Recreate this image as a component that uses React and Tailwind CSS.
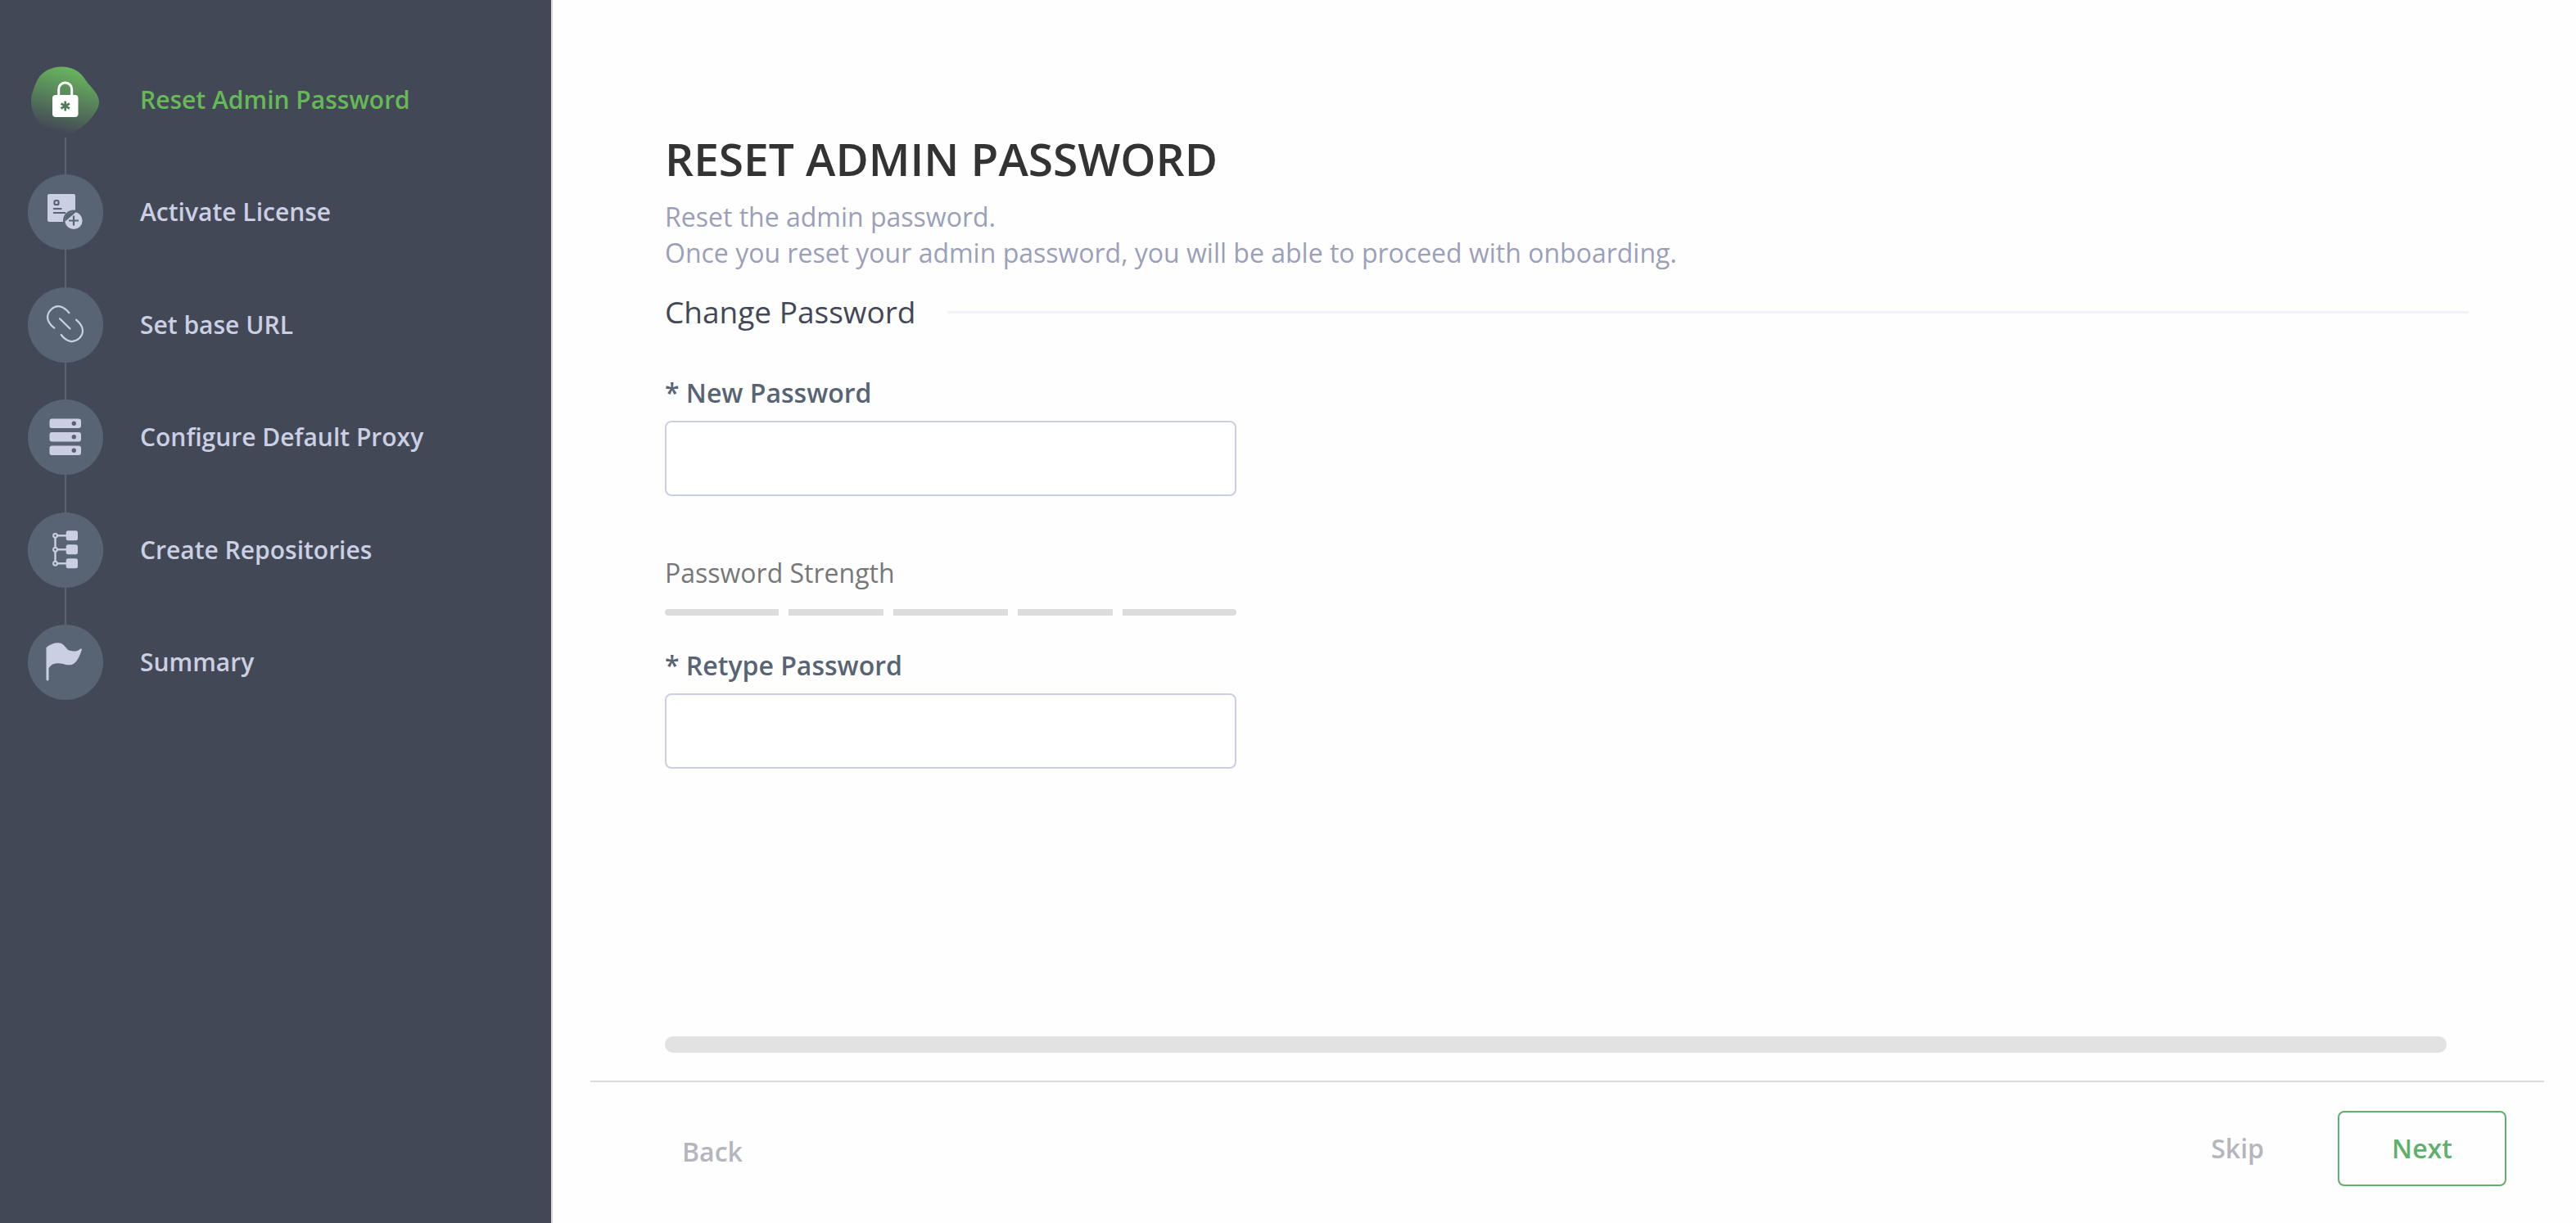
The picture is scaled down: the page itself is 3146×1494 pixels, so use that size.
import React, { useState } from 'react';

/* Icons share a 92x92 box, the size of a step's circle. */

function PasswordIcon() {
  return (
    <svg viewBox="0 0 92 92" className="size-full" aria-hidden="true">
      <defs>
        <linearGradient id="blob" x1="0.66" y1="0.05" x2="0.4" y2="0.97">
          <stop offset="0" stopColor="#69b45e" />
          <stop offset="1" stopColor="#69b45e" stopOpacity="0" />
        </linearGradient>
      </defs>
      <path
        d="M41 5.500C52 5.500 61 9.500 67 17C70 20.500 71 23 75 27.500C81 34.500 87 41 87 48.500C87 57 80 66 71 75C63 82 54 88 45 88C24 88 4 70 4 48C4 38 8 30 12 21C18 10.500 30 5.500 41 5.500Z"
        fill="url(#blob)"
      />
      <path d="M37.700 42V33a8 8 0 0 1 16 0V42" fill="none" stroke="#fff" strokeWidth="3" />
      <rect x="30" y="40" width="31.500" height="27" rx="4" fill="#fff" />
      <path d="M45.700 47.500v12M40.500 50.500l10.400 6M40.500 56.500l10.400-6" stroke="#4f7a5c" strokeWidth="2.600" />
    </svg>
  );
}

function LicenseIcon() {
  return (
    <svg viewBox="0 0 92 92" className="size-full" aria-hidden="true">
      <rect x="24" y="24" width="34" height="34" rx="2" fill="#cbcfe3" />
      <rect x="32.500" y="32" width="5" height="5" rx="1.500" fill="none" stroke="#586474" strokeWidth="2.200" />
      <path d="M31 42h10.500M31 47h15" stroke="#586474" strokeWidth="2.200" />
      <circle cx="56" cy="56.500" r="13" fill="#586474" />
      <circle cx="56" cy="56.500" r="10.600" fill="#cbcfe3" />
      <path d="M45.500 57.500C44.500 50 51 44.500 58.500 46.200Z" fill="#586474" />
      <path d="M56 50.500v12M50 56.500h12" stroke="#586474" strokeWidth="2.200" />
    </svg>
  );
}

function LinkIcon() {
  return (
    <svg viewBox="0 0 92 92" className="size-full" aria-hidden="true">
      <g fill="none" stroke="#cbcfe3" strokeWidth="2.200" strokeLinecap="round">
        <path d="M50.500 31.200C43 22 35 21 29 26.500C22 33 22 42 32.300 49.700" />
        <path d="M59 39.700C69 48 69 56 62.500 62.500C56 68 48 67.500 40.700 58" />
        <path d="M39 38.300L51.500 50.500" />
      </g>
    </svg>
  );
}

function ProxyIcon() {
  return (
    <svg viewBox="0 0 92 92" className="size-full" aria-hidden="true">
      {[23.5, 40, 56.5].map((y) => (
        <g key={y}>
          <rect x="26.500" y={y} width="38.500" height="11.500" rx="3" fill="#cbcfe3" />
          <circle cx="56.300" cy={y + 5.8} r="2.700" fill="#586474" />
        </g>
      ))}
    </svg>
  );
}

function RepositoriesIcon() {
  return (
    <svg viewBox="0 0 92 92" className="size-full" aria-hidden="true">
      <path d="M33.500 28v34.500" stroke="#cbcfe3" strokeWidth="2.400" />
      {[28.3, 45.3, 62.3].map((y) => (
        <g key={y}>
          <path d={`M36 ${y}h12`} stroke="#cbcfe3" strokeWidth="2.400" />
          <circle cx="33.500" cy={y} r="2.400" fill="#586474" stroke="#cbcfe3" strokeWidth="2" />
          <rect x="46.700" y={y - 6} width="14.300" height="12" rx="2.500" fill="#cbcfe3" />
        </g>
      ))}
    </svg>
  );
}

function SummaryIcon() {
  return (
    <svg viewBox="0 0 92 92" className="size-full" aria-hidden="true">
      <path
        d="M22.500 28C27 24 32 22.200 37 22.200C42 22.200 44.500 25.500 47 28.800C49 31.300 50 31.700 54 32.200C60 33 61 32 64 29.800C65.300 29 66.300 29.500 65.800 31C63.500 38 61 44 56.500 47.500C52.500 50.300 47 49.300 43 48C35 46 28.500 47.500 25.500 53.500V67a1.300 1.300 0 0 1-3 0Z"
        fill="#cbcfe3"
      />
    </svg>
  );
}

const STEPS = [
  { id: 'password', label: 'Reset Admin Password', icon: <PasswordIcon /> },
  { id: 'license', label: 'Activate License', icon: <LicenseIcon /> },
  { id: 'url', label: 'Set base URL', icon: <LinkIcon /> },
  { id: 'proxy', label: 'Configure Default Proxy', icon: <ProxyIcon /> },
  { id: 'repositories', label: 'Create Repositories', icon: <RepositoriesIcon /> },
  { id: 'summary', label: 'Summary', icon: <SummaryIcon /> },
];

function StepSidebar({ current }) {
  return (
    <aside className="w-[675px] shrink-0 border-r-2 border-[#d8d8da] bg-[#434856] px-[34px] pt-[76px]">
      <ol className="flex h-[779px] flex-col">
        {STEPS.map(({ id, label, icon }, i) => {
          const isCurrent = id === current;
          return (
            <React.Fragment key={id}>
              {i > 0 && <li aria-hidden="true" className="ml-[45px] w-0.5 flex-1 bg-[#586474]" />}
              <li
                aria-current={isCurrent ? 'step' : undefined}
                className="flex shrink-0 items-center gap-[45px]"
              >
                <span className={`size-[92px] shrink-0 rounded-full ${isCurrent ? '' : 'bg-[#586474]'}`}>
                  {icon}
                </span>
                <span
                  className={`text-[30px] leading-[44px] font-semibold ${
                    isCurrent ? 'text-[#65b957]' : 'text-[#cbcfe3]'
                  }`}
                >
                  {label}
                </span>
              </li>
            </React.Fragment>
          );
        })}
      </ol>
    </aside>
  );
}

function PasswordField({ id, label, value, onChange }) {
  return (
    <div className="flex flex-col gap-3">
      <label htmlFor={id} className="text-[32px] leading-[44px] font-semibold text-[#586474]">
        * {label}
      </label>
      <input
        id={id}
        type="password"
        required
        value={value}
        onChange={(e) => onChange(e.target.value)}
        className="h-[92px] w-full rounded-lg border-2 border-[#cbcfe3] bg-white px-6 text-[32px] outline-none focus:border-[#5fb06c]"
      />
    </div>
  );
}

function PasswordStrength() {
  return (
    <div>
      <p className="text-[32px] leading-[44px] text-[#777777]">Password Strength</p>
      <div className="mt-[22px] grid h-2 grid-cols-[6fr_5fr_6fr_5fr_6fr] gap-3 overflow-hidden rounded">
        {[1, 2, 3, 4, 5].map((level) => (
          <span key={level} className="bg-[#dcdcdc]" />
        ))}
      </div>
    </div>
  );
}

export default function App() {
  const [password, setPassword] = useState('');
  const [retyped, setRetyped] = useState('');

  return (
    <div className="flex min-h-screen bg-[#fefefe] font-['Open_Sans',sans-serif]">
      <StepSidebar current="password" />

      <main className="flex min-w-0 flex-1 flex-col">
        <div className="flex flex-1 flex-col pt-[162px] pr-[131px] pl-[137px]">
          <h1 className="text-[55px] leading-[64px] font-semibold text-[#333333]">RESET ADMIN PASSWORD</h1>
          <p className="mt-[17px] text-[32px] leading-[44px] text-[#9c9fb9]">
            Reset the admin password.
            <br />
            Once you reset your admin password, you will be able to proceed with onboarding.
          </p>

          <div className="mt-[26px] flex items-center gap-[38px]">
            <h2 className="text-[37px] leading-[48px] text-[#434856]">Change Password</h2>
            <hr className="h-[3px] flex-1 border-0 bg-[#f2f2f8]" />
          </div>

          <form className="mt-[53px] w-[698px]">
            <PasswordField id="new-password" label="New Password" value={password} onChange={setPassword} />
            <div className="mt-[72px] mb-[39px]">
              <PasswordStrength />
            </div>
            <PasswordField id="retype-password" label="Retype Password" value={retyped} onChange={setRetyped} />
          </form>

          <div className="mt-auto mr-[27px] mb-[34px] h-5 rounded-full bg-[#e2e2e2]" />
        </div>

        <footer className="mr-[39px] ml-[46px] flex items-start gap-[90px] border-t-2 border-[#dadadc] pt-[35px] pr-[46px] pb-[37px] pl-[112px] text-[32px] leading-[44px] font-semibold">
          <button type="button" className="mr-auto py-7 text-[#b5b6bd]">
            Back
          </button>
          <button type="button" className="h-[92px] text-[#b5b6bd]">
            Skip
          </button>
          <button type="button" className="h-[92px] w-[206px] rounded-lg border-2 border-[#5fb06c] text-[#5fb06c]">
            Next
          </button>
        </footer>
      </main>
    </div>
  );
}
